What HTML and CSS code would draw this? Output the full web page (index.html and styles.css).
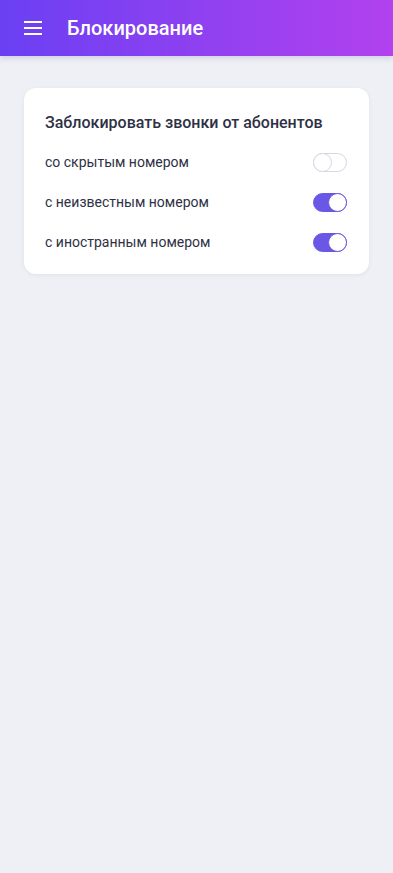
FILE: index.html
```html
<html>
  <head>
    <meta charset="utf-8">
    <title>Блокирование</title>
    <link rel="stylesheet" href="styles.css">
  </head>
  <body>
    <div class="appbar">
      <svg class="menu" width="18" height="14" viewBox="0 0 18 14">
        <rect x="0" y="0" width="18" height="2" fill="#fff"/>
        <rect x="0" y="6" width="18" height="2" fill="#fff"/>
        <rect x="0" y="12" width="18" height="2" fill="#fff"/>
      </svg>
      <div class="title">Блокирование</div>
    </div>
    <div class="content">
      <div class="card">
        <div class="card-title">Заблокировать звонки от абонентов</div>
        <div class="row">
          <div class="label">со скрытым номером</div>
          <div class="switch"><div class="knob"></div></div>
        </div>
        <div class="row">
          <div class="label">с неизвестным номером</div>
          <div class="switch on"><div class="knob"></div></div>
        </div>
        <div class="row">
          <div class="label">с иностранным номером</div>
          <div class="switch on"><div class="knob"></div></div>
        </div>
      </div>
    </div>
  </body>
</html>
```
FILE: styles.css
```css
body {
  margin: 0;
  background: #eef0f5;
  font-family: Roboto, "Noto Sans", sans-serif;
  color: #2e3145;
}
.appbar {
  height: 56px;
  display: flex;
  align-items: center;
  padding-left: 24px;
  background: linear-gradient(90deg, #6a40f3 0%, #b241ee 100%);
  box-shadow: 0 2px 6px rgba(80, 70, 160, 0.2);
  position: relative;
}
.menu {
  display: block;
  margin-right: 25px;
}
.title {
  color: #fff;
  font-size: 20px;
  font-weight: 500;
}
.content {
  padding: 32px 24px;
}
.card {
  background: #fff;
  border-radius: 12px;
  padding: 24px 22px 12px 21px;
  box-shadow: 0 1px 4px rgba(60, 70, 110, 0.08);
}
.card-title {
  font-size: 16px;
  font-weight: 500;
  line-height: 20px;
  margin-bottom: 9px;
  margin-top: 1px;
}
.row {
  display: flex;
  align-items: center;
  justify-content: space-between;
  height: 40px;
}
.label {
  font-size: 14px;
}
.switch {
  width: 34px;
  height: 19px;
  box-sizing: border-box;
  border-radius: 10px;
  border: 1px solid #d3d8e3;
  background: #fff;
  display: flex;
  justify-content: flex-start;
}
.knob {
  width: 19px;
  height: 19px;
  box-sizing: border-box;
  border-radius: 50%;
  border: 1px solid #d3d8e3;
  background: #fff;
  margin: -1px;
}
.switch.on {
  background: #6b57e6;
  border-color: #6b57e6;
  justify-content: flex-end;
}
.switch.on .knob {
  border-color: #6b57e6;
}
```
